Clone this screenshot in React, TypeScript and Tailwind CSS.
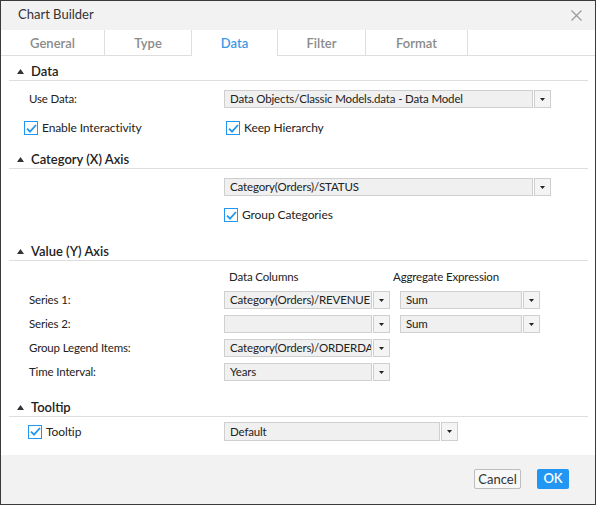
import React from "react";

const font = { fontFamily: "Lato, 'Noto Sans', sans-serif" };

function Caret() {
  return (
    <svg width="7" height="5" viewBox="0 0 7 5" className="shrink-0">
      <polygon points="0,5 3.5,0 7,5" fill="#333" />
    </svg>
  );
}

function SectionHeader({ title, className }: { title: string; className: string }) {
  return (
    <div className={`flex h-[17px] items-center border-b border-[#dedede] ${className}`}>
      <span className="ml-[8px] mr-[7px] mb-[1px]">
        <Caret />
      </span>
      <span className="text-[13px] font-semibold text-[#222]">{title}</span>
    </div>
  );
}

function Dropdown({
  value,
  boxClass,
}: {
  value: string;
  boxClass: string;
}) {
  return (
    <div className="flex h-[18px]">
      <div
        className={`flex items-center overflow-hidden whitespace-nowrap border border-[#cfcfcf] bg-[#f0f0f0] pl-[5px] text-[11.5px] tracking-[-0.15px] text-[#222] ${boxClass}`}
      >
        {value}
      </div>
      <div className="ml-[1px] flex w-[17px] items-center justify-center border border-[#cfcfcf] bg-[#f4f4f4]">
        <svg width="5" height="3" viewBox="0 0 5 3">
          <polygon points="0,0 5,0 2.5,3" fill="#222" />
        </svg>
      </div>
    </div>
  );
}

function Check({ label, className }: { label: string; className: string }) {
  return (
    <div className={`flex items-center ${className}`}>
      <div className="flex h-[14px] w-[14px] items-center justify-center border border-[#2196f3] bg-white">
        <svg width="11" height="9" viewBox="0 0 11 9">
          <path d="M1 4.6 L4 7.6 L10 1" fill="none" stroke="#2196f3" strokeWidth="1.8" />
        </svg>
      </div>
      <span className="ml-[4px] text-[12px] tracking-[-0.1px] text-[#222]">{label}</span>
    </div>
  );
}

const tabs = [
  { name: "General", w: "w-[104px]" },
  { name: "Type", w: "w-[87px]" },
  { name: "Data", w: "w-[86px]" },
  { name: "Filter", w: "w-[88px]" },
  { name: "Format", w: "w-[102px]" },
];

const label = "w-[215px] pl-[20px] text-[11.5px] tracking-[-0.15px] text-[#222]";

export default function App() {
  return (
    <div style={font} className="flex h-[505px] w-[596px] flex-col overflow-hidden border border-[#3a3a3a] bg-white">
      {/* Title */}
      <div className="flex h-[29px] shrink-0 items-center justify-between bg-[#f2f2f2] pl-[17px] pr-[13px]">
        <span className="mb-[1px] text-[13px] text-[#333]">Chart Builder</span>
        <svg width="11" height="11" viewBox="0 0 11 11">
          <path d="M0.5 0.5 L10.5 10.5 M10.5 0.5 L0.5 10.5" stroke="#9a9a9a" strokeWidth="1.2" />
        </svg>
      </div>

      {/* Tabs */}
      <div className="flex h-[26px] shrink-0 bg-white">
        {tabs.map((t) => {
          const active = t.name === "Data";
          return (
            <div
              key={t.name}
              className={`flex items-center justify-center border-r border-[#dedede] pt-[2px] text-[13px] ${t.w} ${
                active
                  ? "font-semibold text-[#3a9ae8]"
                  : "border-b font-semibold text-[#8a8a8a]"
              }`}
            >
              {t.name}
            </div>
          );
        })}
        <div className="flex-1 border-b border-[#dedede]" />
      </div>

      {/* Body */}
      <div className="flex-1 pl-[8px] pr-[7px]">
        <SectionHeader title="Data" className="mt-[8px]" />
        <div className="mt-[9px] flex items-center">
          <span className={label}>Use Data:</span>
          <Dropdown value="Data Objects/Classic Models.data - Data Model" boxClass="w-[309px]" />
        </div>
        <div className="mt-[12px] flex h-[16px] items-center">
          <Check label="Enable Interactivity" className="w-[217px] pl-[15px]" />
          <Check label="Keep Hierarchy" className="" />
        </div>

        <SectionHeader title="Category (X) Axis" className="mt-[16px]" />
        <div className="mt-[9px] flex items-center pl-[215px]">
          <Dropdown value="Category(Orders)/STATUS" boxClass="w-[309px]" />
        </div>
        <div className="mt-[11px] flex h-[16px] items-center pl-[215px]">
          <Check label="Group Categories" className="" />
        </div>

        <SectionHeader title="Value (Y) Axis" className="mt-[21px]" />
        <div className="mt-[8px] flex h-[16px] items-center text-[11.5px] tracking-[-0.15px] text-[#222]">
          <span className="w-[220px]" />
          <span className="w-[164px]">Data Columns</span>
          <span>Aggregate Expression</span>
        </div>
        <div className="mt-[6px] flex flex-col gap-[6px]">
          <div className="flex items-center">
            <span className={label}>Series 1:</span>
            <Dropdown value="Category(Orders)/REVENUE" boxClass="w-[148px]" />
            <div className="ml-[10px]">
              <Dropdown value="Sum" boxClass="w-[122px]" />
            </div>
          </div>
          <div className="flex items-center">
            <span className={label}>Series 2:</span>
            <Dropdown value="" boxClass="w-[148px]" />
            <div className="ml-[10px]">
              <Dropdown value="Sum" boxClass="w-[122px]" />
            </div>
          </div>
          <div className="flex items-center">
            <span className={label}>Group Legend Items:</span>
            <Dropdown value="Category(Orders)/ORDERDATE" boxClass="w-[148px]" />
          </div>
          <div className="flex items-center">
            <span className={label}>Time Interval:</span>
            <Dropdown value="Years" boxClass="w-[148px]" />
          </div>
        </div>

        <SectionHeader title="Tooltip" className="mt-[19px]" />
        <div className="mt-[5px] flex items-center">
          <Check label="Tooltip" className="w-[215px] pl-[19px]" />
          <div className="[&>div]:h-[19px]">
            <Dropdown value="Default" boxClass="w-[216px]" />
          </div>
        </div>
      </div>

      {/* Footer */}
      <div className="flex h-[49px] shrink-0 items-start justify-end gap-[16px] bg-[#f2f2f2] pr-[26px] pt-[14px]">
        <button className="h-[20px] w-[47px] rounded-[2px] border border-[#bdbdbd] bg-[#f8f8f8] text-[13px] text-[#333]">
          Cancel
        </button>
        <button className="h-[20px] w-[32px] rounded-[2px] bg-[#2196f3] text-[13px] font-semibold text-white">
          OK
        </button>
      </div>
    </div>
  );
}
